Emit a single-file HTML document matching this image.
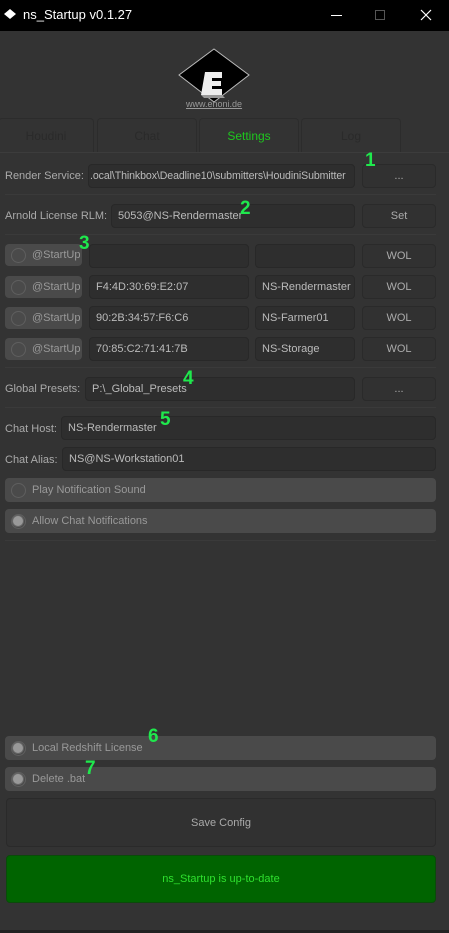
<!DOCTYPE html>
<html><head><meta charset="utf-8"><style>
*{box-sizing:border-box;margin:0;padding:0}
body{width:449px;height:933px;background:#333;font-family:"Liberation Sans",sans-serif;font-size:11px;color:#aaa;position:relative;overflow:hidden}
.a{position:absolute}
.in{position:absolute;background:#2e2e2e;border:1px solid #282828;border-radius:4px;color:#bbb;padding-left:6px;display:flex;align-items:center;white-space:nowrap;overflow:hidden}
.bt{position:absolute;background:#313131;border:1px solid #2a2a2a;border-radius:4px;color:#aaa;display:flex;align-items:center;justify-content:center}
.ln{position:absolute;left:5px;width:431px;height:1px;background:#252525;border-bottom:1px solid #3a3a3a}
.cb{position:absolute;background:#4a4a4a;border-radius:4px;color:#999;display:flex;align-items:center;padding-left:27px}
.cb::before{content:"";position:absolute;left:6px;top:50%;margin-top:-7px;width:13px;height:13px;border:1.5px solid #5f5f5f;border-radius:50%}
.cb.on::after{content:"";position:absolute;left:8px;top:50%;margin-top:-5px;width:10px;height:10px;border-radius:50%;background:#999;box-shadow:0 0 0 1px #666}
.lb{position:absolute;color:#aaa}
.n{position:absolute;color:#1fe84d;font-weight:bold;font-size:19px}
.tab{position:absolute;top:118px;height:34px;border:1px solid #2c2c2c;border-bottom:none;border-radius:4px 4px 0 0;display:flex;align-items:center;justify-content:center;color:#2a2a2a;font-size:12px}
</style></head><body>
<div class="a" style="left:0;top:0;width:449px;height:31px;background:#000"></div>
<svg class="a" style="left:4px;top:9px" width="12" height="11"><polygon points="6,0 12,5 6,10 0,5" fill="#fff"/></svg>
<div class="a" style="left:23px;top:7px;color:#fff;font-size:13px">ns_Startup v0.1.27</div>
<div class="a" style="left:331px;top:15px;width:11px;height:1px;background:#fff"></div>
<div class="a" style="left:375px;top:10px;width:10px;height:10px;border:1px solid #555"></div>
<svg class="a" style="left:420px;top:9px" width="12" height="12"><path d="M1 1L11 11M11 1L1 11" stroke="#fff" stroke-width="1.2"/></svg>
<svg class="a" style="left:178px;top:48px" width="72" height="56"><polygon points="36,1 71,27 36,54 1,27" fill="#000" stroke="#bbb" stroke-width="1"/><path d="M27 24h17v6h-10v3h9v5h-9v3h10v6H23z" fill="#eee"/><path d="M23 47h21l3 3H26z" fill="#999"/></svg>
<div class="a" style="left:186px;top:99px;font-size:9px;color:#999;text-decoration:underline">www.enoni.de</div>
<div class="tab" style="left:-2px;width:96px">Houdini</div>
<div class="tab" style="left:97px;width:100px">Chat</div>
<div class="tab" style="left:199px;width:100px;color:#1ec81e">Settings</div>
<div class="tab" style="left:301px;width:100px">Log</div>
<div class="a" style="left:0;top:152px;width:449px;height:1px;background:#2a2a2a;border-bottom:1px solid #3c3c3c"></div>

<div class="lb" style="left:5px;top:170px">Render Service:</div>
<div class="in" style="left:88px;top:164px;width:267px;height:24px;padding-left:1px;font-size:10.6px;letter-spacing:-0.1px">.ocal\Thinkbox\Deadline10\submitters\HoudiniSubmitter</div>
<div class="bt" style="left:362px;top:164px;width:74px;height:24px">...</div>
<div class="ln" style="top:194px"></div>
<div class="lb" style="left:5px;top:210px">Arnold License RLM:</div>
<div class="in" style="left:111px;top:204px;width:244px;height:24px">5053@NS-Rendermaster</div>
<div class="bt" style="left:362px;top:204px;width:74px;height:24px">Set</div>
<div class="ln" style="top:234px"></div>

<div class="cb" style="left:5px;top:244px;width:77px;height:22px">@StartUp</div>
<div class="in" style="left:89px;top:244px;width:160px;height:24px"></div>
<div class="in" style="left:255px;top:244px;width:100px;height:24px"></div>
<div class="bt" style="left:362px;top:244px;width:74px;height:24px">WOL</div>
<div class="cb" style="left:5px;top:276px;width:77px;height:22px">@StartUp</div>
<div class="in" style="left:89px;top:275px;width:160px;height:24px">F4:4D:30:69:E2:07</div>
<div class="in" style="left:255px;top:275px;width:100px;height:24px">NS-Rendermaster</div>
<div class="bt" style="left:362px;top:275px;width:74px;height:24px">WOL</div>
<div class="cb" style="left:5px;top:307px;width:77px;height:22px">@StartUp</div>
<div class="in" style="left:89px;top:306px;width:160px;height:24px">90:2B:34:57:F6:C6</div>
<div class="in" style="left:255px;top:306px;width:100px;height:24px">NS-Farmer01</div>
<div class="bt" style="left:362px;top:306px;width:74px;height:24px">WOL</div>
<div class="cb" style="left:5px;top:338px;width:77px;height:22px">@StartUp</div>
<div class="in" style="left:89px;top:337px;width:160px;height:24px">70:85:C2:71:41:7B</div>
<div class="in" style="left:255px;top:337px;width:100px;height:24px">NS-Storage</div>
<div class="bt" style="left:362px;top:337px;width:74px;height:24px">WOL</div>
<div class="ln" style="top:367px"></div>

<div class="lb" style="left:5px;top:383px">Global Presets:</div>
<div class="in" style="left:85px;top:377px;width:270px;height:24px">P:\_Global_Presets</div>
<div class="bt" style="left:362px;top:377px;width:74px;height:24px">...</div>
<div class="ln" style="top:407px"></div>
<div class="lb" style="left:5px;top:423px">Chat Host:</div>
<div class="in" style="left:61px;top:416px;width:375px;height:24px">NS-Rendermaster</div>
<div class="lb" style="left:5px;top:454px">Chat Alias:</div>
<div class="in" style="left:62px;top:447px;width:374px;height:24px">NS@NS-Workstation01</div>
<div class="cb" style="left:5px;top:478px;width:431px;height:24px">Play Notification Sound</div>
<div class="cb on" style="left:5px;top:509px;width:431px;height:24px">Allow Chat Notifications</div>
<div class="ln" style="top:540px"></div>

<div class="cb on" style="left:5px;top:736px;width:431px;height:24px">Local Redshift License</div>
<div class="cb on" style="left:5px;top:767px;width:431px;height:24px">Delete .bat</div>
<div class="bt" style="left:6px;top:798px;width:430px;height:49px;background:#313131;color:#aaa">Save Config</div>
<div class="bt" style="left:6px;top:855px;width:430px;height:48px;background:#006400;border-color:#0a4a0a;color:#2ee02e">ns_Startup is up-to-date</div>
<div class="a" style="left:0;top:930px;width:449px;height:3px;background:#222"></div>

<div class="n" style="left:365px;top:150px">1</div>
<div class="n" style="left:240px;top:198px">2</div>
<div class="n" style="left:79px;top:233px">3</div>
<div class="n" style="left:183px;top:368px">4</div>
<div class="n" style="left:160px;top:409px">5</div>
<div class="n" style="left:148px;top:726px">6</div>
<div class="n" style="left:85px;top:758px">7</div>
</body></html>
